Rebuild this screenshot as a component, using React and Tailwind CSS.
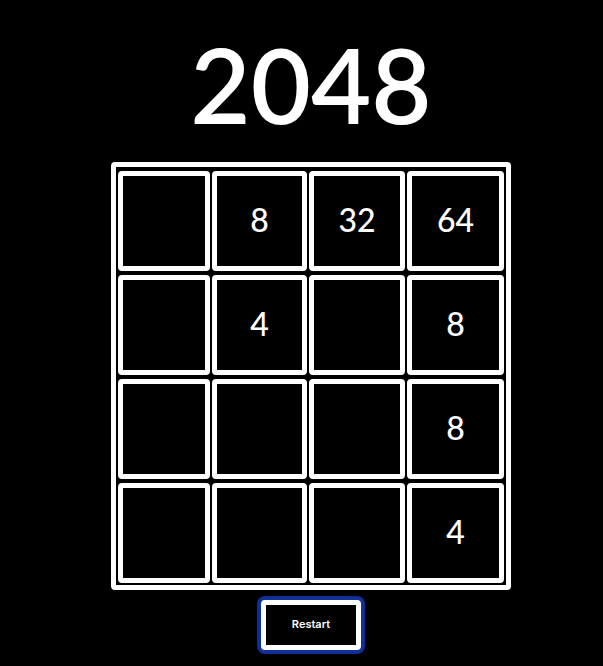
const board = [
  [0, 8, 32, 64],
  [0, 4, 0, 8],
  [0, 0, 0, 8],
  [0, 0, 0, 4],
];

function Tile({ value }) {
  return (
    <div className="flex h-[100px] items-center justify-center rounded border-5 border-white pb-0.5 text-[32px] leading-none font-medium">
      {value > 0 ? value : null}
    </div>
  );
}

export default function App() {
  return (
    <main className="flex min-h-screen flex-col items-center bg-black pt-[30px] pl-[19px] font-['Lato',sans-serif] text-white">
      <h1 className="text-[104px] leading-[108px] font-semibold">2048</h1>
      <div className="mt-6 grid w-[400px] max-w-full grid-cols-[92fr_95fr_96fr_97fr] gap-x-0.5 gap-y-1 rounded border-5 border-white px-0.5 pt-1 pb-0.5">
        {board.flat().map((value, index) => (
          <Tile key={index} value={value} />
        ))}
      </div>
      <button
        type="button"
        className="mt-[10px] h-[50px] w-[100px] rounded border-5 border-white bg-black pb-0.5 font-['Inter',sans-serif] text-[11px] font-semibold shadow-[0_0_1px_4px_#12309a] outline-none"
      >
        Restart
      </button>
    </main>
  );
}
